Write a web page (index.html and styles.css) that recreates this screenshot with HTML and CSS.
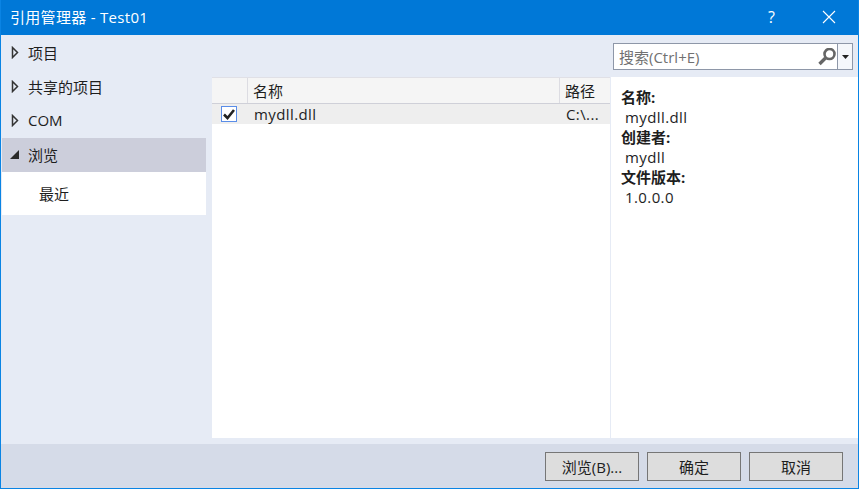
FILE: index.html
```html
<!DOCTYPE html>
<html lang="zh-CN">
<head>
<meta charset="utf-8">
<title>引用管理器 - Test01</title>
<link rel="stylesheet" href="styles.css">
</head>
<body>
<div class="window">
  <header class="titlebar">
    <span class="title">引用管理器 - Test01</span>
    <span class="help">?</span>
    <svg class="close" width="14" height="14" viewBox="0 0 14 14"><path d="M1 1L13 13M13 1L1 13" stroke="#fff" stroke-width="1.1" fill="none"/></svg>
  </header>
  <div class="body">
    <nav class="side">
      <div class="nav-item"><svg class="arrow" width="8" height="13" viewBox="0 0 8 13"><path d="M1.5 1.5L6.5 6.5L1.5 11.5Z" fill="#e6ebf5" stroke="#333" stroke-width="1.5"/></svg><span>项目</span></div>
      <div class="nav-item"><svg class="arrow" width="8" height="13" viewBox="0 0 8 13"><path d="M1.5 1.5L6.5 6.5L1.5 11.5Z" fill="#e6ebf5" stroke="#333" stroke-width="1.5"/></svg><span>共享的项目</span></div>
      <div class="nav-item"><svg class="arrow" width="8" height="13" viewBox="0 0 8 13"><path d="M1.5 1.5L6.5 6.5L1.5 11.5Z" fill="#e6ebf5" stroke="#333" stroke-width="1.5"/></svg><span>COM</span></div>
      <div class="nav-item selected"><svg class="arrow open" width="10" height="10" viewBox="0 0 10 10"><path d="M0 10H9V1Z" fill="#2a2a2a"/></svg><span>浏览</span></div>
      <div class="nav-sub">最近</div>
    </nav>
    <main class="main">
      <div class="searchrow">
        <div class="search">
          <span class="placeholder">搜索(Ctrl+E)</span>
          <svg class="mag" width="18" height="18" viewBox="0 0 18 18"><circle cx="11.5" cy="6" r="5" fill="none" stroke="#666" stroke-width="2.6"/><path d="M7.5 10L1.5 16" stroke="#666" stroke-width="3.4"/></svg>
          <span class="drop"><svg width="7" height="4" viewBox="0 0 7 4"><path d="M0 0H7L3.5 4Z" fill="#222"/></svg></span>
        </div>
      </div>
      <div class="panes">
        <section class="list">
          <div class="thead">
            <div class="c-check"></div>
            <div class="c-name">名称</div>
            <div class="c-path">路径</div>
          </div>
          <div class="trow">
            <div class="c-check"><span class="checkbox"><svg width="12" height="11" viewBox="0 0 12 11"><path d="M1 5.5L4.5 9L11 1" fill="none" stroke="#222" stroke-width="2.6"/></svg></span></div>
            <div class="c-name wide">mydll.dll</div>
            <div class="c-path wide">C:\...</div>
          </div>
        </section>
        <aside class="details">
          <div class="k">名称:</div>
          <div class="v wide">mydll.dll</div>
          <div class="k">创建者:</div>
          <div class="v wide">mydll</div>
          <div class="k">文件版本:</div>
          <div class="v wide">1.0.0.0</div>
        </aside>
      </div>
    </main>
  </div>
  <footer class="footer">
    <button class="btn">浏览(B)...</button>
    <button class="btn">确定</button>
    <button class="btn">取消</button>
  </footer>
</div>
</body>
</html>
```
FILE: styles.css
```css
* { box-sizing: border-box; }
html, body { margin: 0; padding: 0; background: #fff; }
body { width: 860px; height: 490px; overflow: hidden; font-family: "Open Sans", "Noto Sans CJK SC", sans-serif; font-size: 15px; color: #1e1e1e; }
.wide { letter-spacing: 0.4px; }
.window { width: 859px; height: 489px; border: 1px solid #0a84e4; border-top: 0; display: flex; flex-direction: column; background: #e6ebf5; }
.titlebar { height: 35px; flex: none; background: #0078d7; color: #fff; display: flex; align-items: center; padding-left: 9px; padding-bottom: 2px; font-size: 15px; }
.title { flex: 1; letter-spacing: 0.3px; }
.help { width: 17px; margin-right: 42px; text-align: center; font-size: 16px; }
.close { margin-right: 22px; }
.body { flex: 1; display: flex; min-height: 0; }
.side { width: 211px; flex: none; padding: 1px 6px 0 1px; }
.nav-item { height: 34px; display: flex; align-items: center; padding-left: 9px; padding-bottom: 2px; }
.nav-item .arrow { margin-right: 9px; }
.nav-item .open { margin-left: -1px; margin-right: 8px; }
.nav-item.selected { background: #cccedb; }
.nav-sub { height: 43px; background: #fff; padding-left: 37px; display: flex; align-items: center; }
.main { flex: 1; display: flex; flex-direction: column; min-width: 0; }
.searchrow { height: 42px; flex: none; display: flex; justify-content: flex-end; padding-top: 8px; padding-right: 5px; }
.search { width: 240px; height: 27px; border: 1px solid #8e97a8; background: #fff; display: flex; align-items: center; padding-left: 5px; }
.placeholder { flex: 1; color: #717171; }
.mag { margin-right: 1px; }
.drop { width: 15px; height: 100%; border-left: 1px solid #8e97a8; display: flex; align-items: center; justify-content: center; background: #f5f7fb; }
.panes { height: 361px; flex: none; display: flex; background: #fff; }
.list { width: 399px; flex: none; border-right: 1px solid #e6ebf5; }
.thead { height: 27px; display: flex; background: #f5f5f5; border-top: 1px solid #e0e0e6; border-bottom: 1px solid #cfd0d8; }
.trow { height: 20px; display: flex; align-items: center; background: #eeeeee; }
.c-check { width: 35px; flex: none; display: flex; align-items: center; justify-content: center; height: 100%; padding-right: 2px; }
.c-name { flex: 1; height: 100%; display: flex; align-items: center; padding-left: 5px; }
.thead .c-name, .thead .c-path { border-left: 1px solid #dcdce2; }
.trow .c-name { padding-left: 7px; }
.c-path { width: 51px; flex: none; height: 100%; display: flex; align-items: center; padding-left: 5px; }
.trow .c-path { padding-left: 7px; }
.checkbox { width: 16px; height: 16px; border: 1px solid #5a8de8; background: #fff; display: flex; align-items: center; justify-content: center; }
.details { flex: 1; padding: 10px 10px; line-height: 20px; }
.k { font-weight: 700; }
.v { padding-left: 4px; }
.footer { height: 44px; flex: none; background: #d5dbe8; display: flex; justify-content: flex-end; align-items: center; gap: 8px; padding-right: 15px; padding-top: 1px; }
.btn { width: 94px; height: 29px; border: 1px solid #767676; background: #dddddd; font: inherit; color: #1e1e1e; padding: 0; }
```
